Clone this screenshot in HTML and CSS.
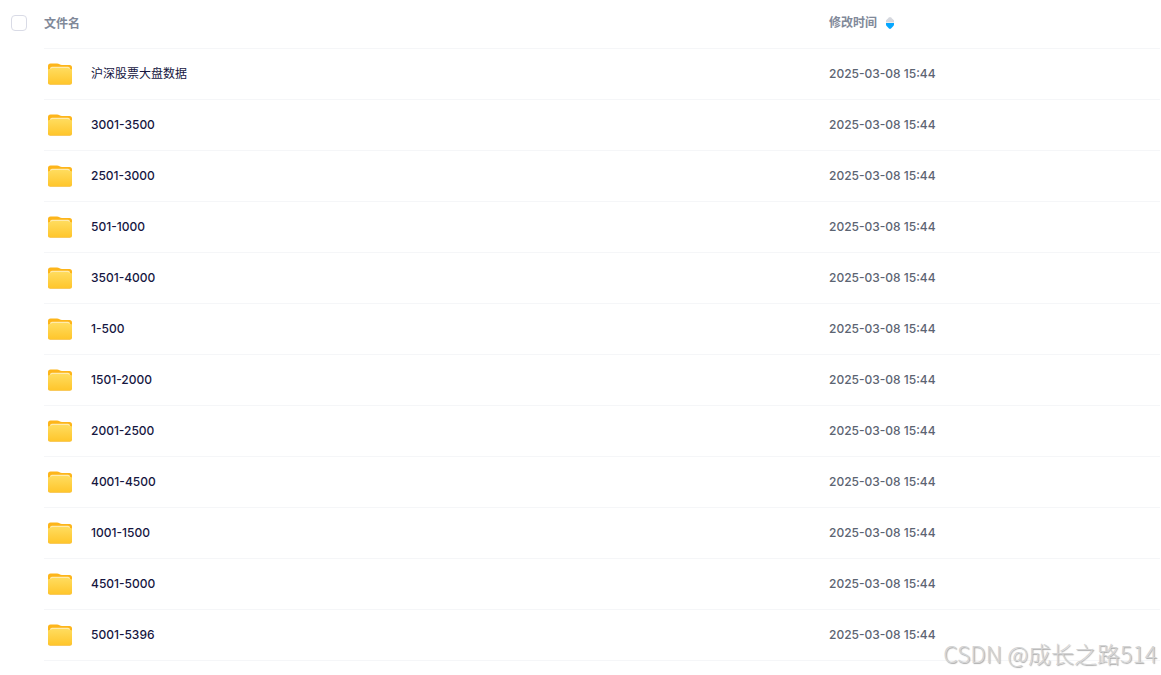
FILE: index.html
```html
<!DOCTYPE html>
<html lang="zh-CN">
<head>
<meta charset="utf-8">
<title>文件列表</title>
<link rel="stylesheet" href="styles.css">
</head>
<body>
<svg class="defs" aria-hidden="true">
  <defs>
    <linearGradient id="front" x1="0" y1="0" x2="0" y2="1">
      <stop offset="0" stop-color="#ffdc5e"/>
      <stop offset="1" stop-color="#ffc62c"/>
    </linearGradient>
    <symbol id="folder" viewBox="0 0 24 22">
      <path fill="#fdb51a" d="M0 3Q0 .5 2.500 .5H9Q10.500 .5 11.500 1.200T14 2H21.500Q24 2 24 4.500V10H0z"/>
      <path fill="#ffebad" d="M2 6Q2 3.800 4 3.800H20Q22 3.800 22 6V8H2z"/>
      <path fill="#f7b928" d="M0 18H24V19.500Q24 21.700 21.800 21.700H2.200Q0 21.700 0 19.500z"/>
      <path fill="url(#front)" d="M0 7Q0 6 1.300 6Q2.200 6 3 5.500Q3.500 5 4.500 5H19.500Q20.500 5 21 5.500Q21.800 6 22.700 6Q24 6 24 7V19Q24 21 22 21H2Q0 21 0 19z"/>
    </symbol>
  </defs>
</svg>
<main class="file-list">
  <table class="files">
    <colgroup><col class="col-check"><col class="col-name"><col class="col-time"></colgroup>
    <thead>
      <tr>
        <th class="check"><input class="checkbox" type="checkbox" aria-label="全选"></th>
        <th class="name-head" scope="col">文件名</th>
        <th scope="col"><button class="sort" type="button">修改时间
          <svg class="sort-icon" viewBox="0 0 8 12" aria-hidden="true"><path fill="#d4d7de" d="M0 5.500V4Q0 3.300 .6 2.700L3 .5Q4 -.3 5 .5L7.400 2.700Q8 3.300 8 4V5.500z"/><path fill="#06a7ff" d="M0 6V7.500Q0 8.300 .6 9L3 11.500Q4 12.300 5 11.500L7.400 9Q8 8.300 8 7.500V6z"/></svg></button></th>
      </tr>
    </thead>
    <tbody>
      <tr><td class="check"></td><td><a class="file file-han" href="#"><svg class="folder"><use href="#folder"/></svg>沪深股票大盘数据</a></td><td class="time">2025-03-08 15:44</td></tr>
      <tr><td class="check"></td><td><a class="file" href="#"><svg class="folder"><use href="#folder"/></svg>3001-3500</a></td><td class="time">2025-03-08 15:44</td></tr>
      <tr><td class="check"></td><td><a class="file" href="#"><svg class="folder"><use href="#folder"/></svg>2501-3000</a></td><td class="time">2025-03-08 15:44</td></tr>
      <tr><td class="check"></td><td><a class="file" href="#"><svg class="folder"><use href="#folder"/></svg>501-1000</a></td><td class="time">2025-03-08 15:44</td></tr>
      <tr><td class="check"></td><td><a class="file" href="#"><svg class="folder"><use href="#folder"/></svg>3501-4000</a></td><td class="time">2025-03-08 15:44</td></tr>
      <tr><td class="check"></td><td><a class="file" href="#"><svg class="folder"><use href="#folder"/></svg>1-500</a></td><td class="time">2025-03-08 15:44</td></tr>
      <tr><td class="check"></td><td><a class="file" href="#"><svg class="folder"><use href="#folder"/></svg>1501-2000</a></td><td class="time">2025-03-08 15:44</td></tr>
      <tr><td class="check"></td><td><a class="file" href="#"><svg class="folder"><use href="#folder"/></svg>2001-2500</a></td><td class="time">2025-03-08 15:44</td></tr>
      <tr><td class="check"></td><td><a class="file" href="#"><svg class="folder"><use href="#folder"/></svg>4001-4500</a></td><td class="time">2025-03-08 15:44</td></tr>
      <tr><td class="check"></td><td><a class="file" href="#"><svg class="folder"><use href="#folder"/></svg>1001-1500</a></td><td class="time">2025-03-08 15:44</td></tr>
      <tr><td class="check"></td><td><a class="file" href="#"><svg class="folder"><use href="#folder"/></svg>4501-5000</a></td><td class="time">2025-03-08 15:44</td></tr>
      <tr><td class="check"></td><td><a class="file" href="#"><svg class="folder"><use href="#folder"/></svg>5001-5396</a></td><td class="time">2025-03-08 15:44</td></tr>
    </tbody>
  </table>
</main>
<div class="watermark">CSDN @成长之路514</div>
</body>
</html>
```
FILE: styles.css
```css
* { box-sizing: border-box; }
body {
  margin: 0;
  background: #fff;
  font-family: Inter, "Noto Sans CJK SC", sans-serif;
  font-size: 12px;
  line-height: 18px;
}
.defs { position: absolute; width: 0; height: 0; }
.file-list { padding-right: 1px; }
.files {
  width: 100%;
  table-layout: fixed;
  border-collapse: separate;
  border-spacing: 0;
}
.col-check { width: 44px; }
.col-time { width: 331px; }
th, td {
  height: 51px;
  padding: 0;
  border-bottom: 1px solid #f5f6f8;
  text-align: left;
  vertical-align: middle;
}
th {
  height: 49px;
  padding-bottom: 2px;
  color: #818999;
  font-weight: 700;
}
.name-head { padding-bottom: 0; }
.check { padding-left: 11px; border-bottom: 0; }
th.check { padding-bottom: 3px; }
.checkbox {
  display: block;
  appearance: none;
  width: 16px;
  height: 16px;
  margin: 0;
  border: 1px solid #d9dbe6;
  border-radius: 4px;
  background: #fff;
}
.sort {
  display: flex;
  align-items: center;
  gap: 9px;
  padding: 0;
  border: 0;
  background: none;
  color: inherit;
  font: inherit;
}
.sort-icon { width: 8px; height: 12px; }
.file {
  display: flex;
  align-items: center;
  gap: 19px;
  padding-left: 4px;
  color: #16163f;
  font-weight: 500;
  text-decoration: none;
}
.file-han { font-weight: 400; }
.folder { width: 24px; height: 22px; }
.time { color: #5c6472; font-weight: 500; }
.watermark {
  position: absolute;
  right: 4px;
  bottom: 6px;
  color: #d4d4d4;
  font-family: "Noto Sans CJK SC", sans-serif;
  font-size: 23px;
  font-weight: 300;
  line-height: 32px;
  text-shadow: 1px 1px 1px #aaa;
}
```
